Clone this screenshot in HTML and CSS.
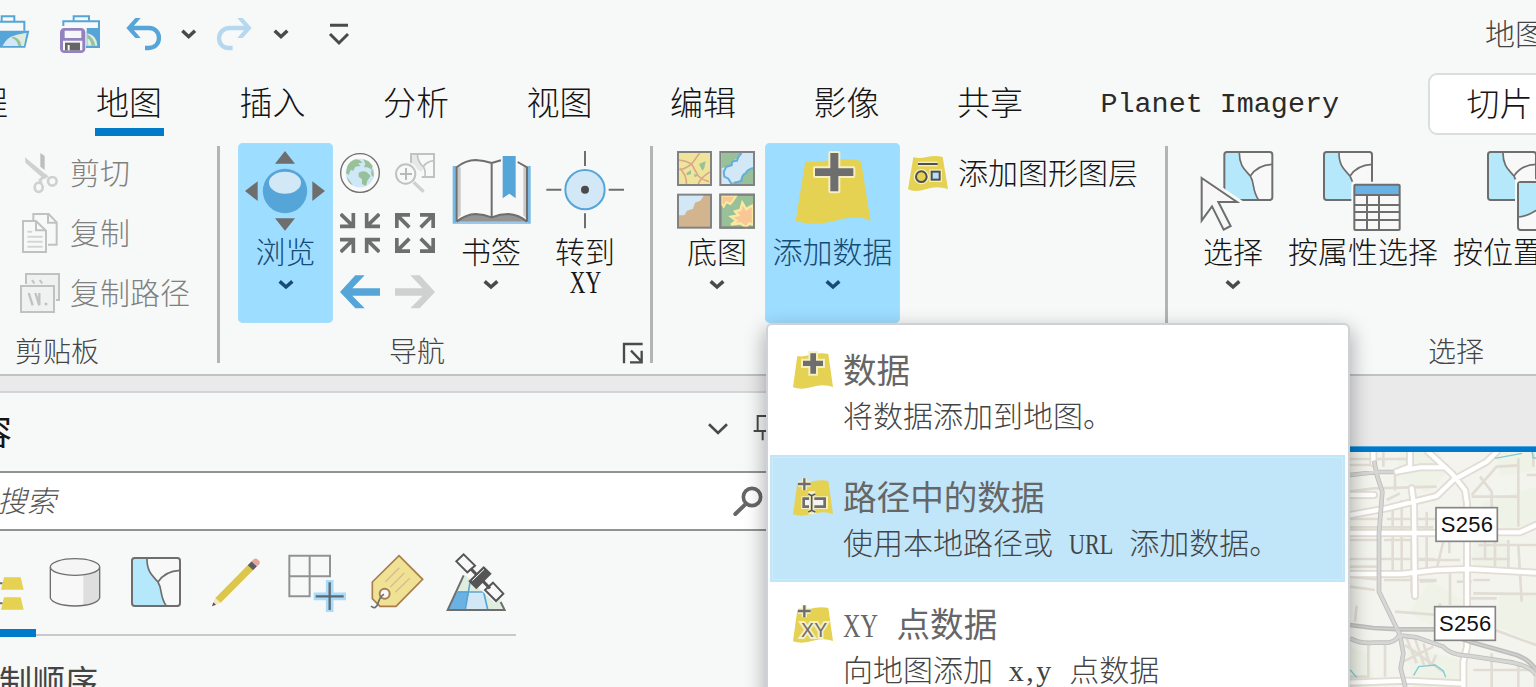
FILE: index.html
```html
<!DOCTYPE html>
<html lang="zh-CN">
<head>
<meta charset="utf-8">
<title>地图</title>
<link rel="stylesheet" href="styles.css">
</head>
<body>
<div class="app">
  <svg class="defs" width="0" height="0">
    <symbol id="chev" viewBox="0 0 48 36"><path d="M5 7L24 24L43 7" fill="none" stroke="currentColor" stroke-width="10.5"/></symbol>
    <symbol id="map" viewBox="390 531 156 156">
      <rect x="397" y="538" width="142" height="142" rx="8" fill="#f8f8f8"/>
      <path d="M397 537H441C440 580 460 592 474 609C488 632 478 650 499 681H397Z" fill="#b4e8fa"/>
      <path d="M441 537C440 580 460 592 474 609C488 632 478 650 499 681M474 609Q495 576 540 574" fill="none" stroke="#6e6e6e" stroke-width="5"/>
      <rect x="396" y="537" width="144" height="144" rx="8" fill="none" stroke="#6e6e6e" stroke-width="6"/>
    </symbol>
    <symbol id="layer" viewBox="78 90 132 120">
      <path d="M97 108Q112 111 130 106Q165 96 190 102L204 201Q180 191 150 199Q110 212 84 202Z" fill="#e5d152"/>
    </symbol>
  </svg>

  <header class="qat">
    <svg class="i-open" width="30" height="42" viewBox="0 39 90 126"><g fill="none" stroke="#56a5d9" stroke-width="6"><path d="M5 62V49H43V62M0 65H73V92" /></g><path d="M0 92H88L76 143H0Z" fill="#56a5d9"/><path d="M8 138Q22 112 50 104L80 98L72 138Z" fill="#dcecdd"/><path d="M8 138Q20 112 42 107L58 138Z" fill="#d2e8f7"/><path d="M36 110Q62 112 64 138H55Q52 120 36 115Z" fill="#98c19a"/></svg>
    <svg class="i-save" width="40" height="42" viewBox="180 39 120 126"><path d="M190 78V64H297V141H258" fill="none" stroke="#56a5d9" stroke-width="6"/><path d="M221 62V49H267V62" fill="none" stroke="#56a5d9" stroke-width="6"/><path d="M260 84H300V144H260Z" fill="#56a5d9"/><path d="M262 100Q290 105 292 137H262Z" fill="#dcecdd"/><path d="M262 102Q282 115 286 137H275Q273 120 262 114Z" fill="#98c19a"/><rect x="183" y="87" width="70" height="69" rx="10" fill="#9482c0" stroke="#9482c0" stroke-width="6"/><path d="M194 92H244V114H194ZM189 122H247V151H189Z" fill="#f7f7f7"/><path d="M195 128H240V151H195Z" fill="#666"/><path d="M203 135H209V151H203Z" fill="#f7f7f7"/></svg>
    <svg class="i-undo" width="36" height="42" viewBox="378 39 108 126"><path d="M388 84H447C487 84 487 144 446 144H435" fill="none" stroke="#56a5d9" stroke-width="13"/><path d="M379 84L406 54H422L396 84L422 114H406Z" fill="#56a5d9"/></svg>
    <svg class="i-drop" width="18" height="42" viewBox="540 39 54 126"><path d="M547 92L566 110L585 92" fill="none" stroke="#4a4a4a" stroke-width="10.5"/></svg>
    <svg class="i-redo" width="36" height="42" viewBox="648 39 108 126"><path d="M745 84H690C647 84 647 144 686 144H698" fill="none" stroke="#b5d8ef" stroke-width="13"/><path d="M755 84L728 54H712L738 84L712 114H728Z" fill="#b5d8ef"/></svg>
    <svg class="i-drop2" width="18" height="42" viewBox="816 39 54 126"><path d="M824 92L843 110L862 92" fill="none" stroke="#4a4a4a" stroke-width="10.5"/></svg>
    <svg class="i-custom" width="22" height="42" viewBox="984 39 66 126"><path d="M990 76H1044M990 102L1017 129L1044 102" fill="none" stroke="#4a4a4a" stroke-width="9"/></svg>
    <span class="doc-title">地图</span>
  </header>

  <nav class="tabs">
    <span class="tab first">工程</span>
    <span class="tab active">地图</span>
    <span class="tab">插入</span>
    <span class="tab">分析</span>
    <span class="tab">视图</span>
    <span class="tab">编辑</span>
    <span class="tab">影像</span>
    <span class="tab">共享</span>
    <span class="tab latin">Planet Imagery</span>
    <span class="context-tab">切片</span>
  </nav>

  <section class="ribbon">
    <div class="group clipboard">
      <div class="rows">
        <div class="small-btn"><svg width="42" height="42" viewBox="57 36 126 126"><path d="M121 39L134 48V90L121 80Z" fill="#bdbfbe"/><path d="M75 52L146 110L132 118L76 68Z" fill="#cfd1d0"/><g fill="none" stroke="#cfd1d0" stroke-width="8"><circle cx="157" cy="124" r="13"/><ellipse cx="116" cy="142" rx="12" ry="14"/><path d="M124 129L120 120L140 104"/></g></svg><span>剪切</span></div>
        <div class="small-btn"><svg width="42" height="42" viewBox="57 216 126 126"><path d="M100 240V222H146L170 247V314H144M144 224V248H169" fill="none" stroke="#c0c2c1" stroke-width="6"/><path d="M69 243H108L138 272V336H69Z" fill="#f7f9f8" stroke="#c0c2c1" stroke-width="6"/><path d="M108 246V271H138" fill="none" stroke="#c0c2c1" stroke-width="6"/><path d="M82 275H97M82 290H128M82 305H128M82 320H128" stroke="#d4d6d5" stroke-width="6"/></svg><span>复制</span></div>
        <div class="small-btn"><svg width="42" height="42" viewBox="57 396 126 126"><path d="M78 432V402H177V480H168" fill="#f0f0f0" stroke="#c0c2c1" stroke-width="6"/><path d="M96 420L103 430M119 420L127 430" stroke="#c0c2c1" stroke-width="6"/><rect x="63" y="438" width="99" height="78" fill="#f0f1f1" stroke="#c0c2c1" stroke-width="6"/><path d="M86 459L98 496M106 459L118 496M118 459V496M134 492H142" stroke="#c0c2c1" stroke-width="7" fill="none"/></svg><span>复制路径</span></div>
      </div>
      <div class="group-label">剪贴板</div>
    </div>

    <div class="group navigate">
      <div class="btn-row">
        <div class="big-btn browse selected">
          <svg width="80" height="80" viewBox="45 33 240 240"><path d="M165 33L195 71H135ZM165 272L195 235H135ZM45 153L83 124V183ZM285 153L247 124V183Z" fill="#6e6e6e"/><circle cx="165" cy="153" r="66.500" fill="#56a5d9"/><ellipse cx="165" cy="128" rx="48" ry="33" fill="#d2e8f7"/></svg>
          <span>浏览</span><svg class="chev" width="16" height="12"><use href="#chev"/></svg>
        </div>
        <div class="nav-grid">
          <svg width="40" height="40" viewBox="330 39 120 120"><circle cx="390" cy="99" r="58" fill="#fbf9fa" stroke="#6e6e6e" stroke-width="4"/><circle cx="390" cy="99" r="43" fill="#cfe8f8"/><path d="M352 78Q362 62 376 58L388 60L398 68L384 70L392 78L376 80L370 92L362 90L356 105L348 100ZM400 58L416 64L428 78L424 88L412 82L402 82L406 72ZM386 98Q398 90 410 96L422 108L412 122L408 138L396 132L396 118L386 110ZM350 110L362 126L368 136Q354 128 350 110Z" fill="#98c19a"/><path d="M424 84Q434 96 430 112L424 104Z" fill="#98c19a"/></svg>
          <svg width="40" height="40" viewBox="495 39 120 120"><path d="M543 78V42H612V111H575" fill="none" stroke="#c0c2c1" stroke-width="6"/><path d="M546 46H562Q566 70 580 84L575 96L546 78Z" fill="#e6e8e7"/><path d="M562 42Q563 66 580 80Q587 90 585 109M580 80Q590 64 612 62" fill="none" stroke="#c0c2c1" stroke-width="5"/><circle cx="527" cy="102" r="37" fill="#f7f9f8"/><circle cx="527" cy="102" r="29" fill="#f7f9f8" stroke="#c0c2c1" stroke-width="6"/><path d="M510 102H546M528 84V120" stroke="#b8bab9" stroke-width="6"/><path d="M551 127L581 155" stroke="#cfd1d0" stroke-width="10"/></svg>
          <svg width="40" height="40" viewBox="330 219 120 120"><path d="M332 222L370 259M370 219V259H330M448 222L410 259M410 219V259H450M332 336L370 299M370 339V299H330M448 336L410 299M410 339V299H450" fill="none" stroke="#6e6e6e" stroke-width="11"/></svg>
          <svg width="40" height="40" viewBox="495 219 120 120"><path d="M538 262L502 226M500.500 264V224.500H540M572 262L608 226M609.500 264V224.500H570M538 296L502 332M500.500 294V333.500H540M572 296L608 332M609.500 294V333.500H570" fill="none" stroke="#6e6e6e" stroke-width="11"/></svg>
          <svg width="40" height="40" viewBox="330 395 120 120"><path d="M330 455L376 405H404L367 444H450V466H367L404 504H376Z" fill="#56a5d9"/></svg>
          <svg width="40" height="40" viewBox="495 395 120 120"><path d="M615 455L569 405H541L578 444H495V466H578L541 504H569Z" fill="#cfd1d0"/></svg>
        </div>
        <div class="big-btn bookmark">
          <svg width="80" height="80" viewBox="34 33 240 240"><path d="M36 78H270V251H36Z" fill="#78b9e6"/><path d="M34 78L50 76Q75 55 105 54Q130 55 153 63Q180 52 210 52L256 76H274V33H34Z" fill="#f7f9f8"/><path d="M46 80Q75 60 105 60Q130 61 153 69Q180 58 210 58L262 80V247H46Z" fill="#f8f8f8"/><path d="M51 82H60V226L51 236ZM248 82H257V236L248 226Z" fill="#c8c8c8"/><path d="M46 245Q75 221 105 221Q130 222 153 232Q178 221 203 221Q235 223 260 245Z" fill="#949494"/><path d="M48 245V82Q75 60 105 60Q130 61 153 69V232M153 69L181 61M231 66L259 82V245M48 245Q75 223 105 222Q130 223 153 232Q178 222 203 222Q235 224 259 245" fill="none" stroke="#6e6e6e" stroke-width="6"/><path d="M182 44H229V72H182Z" fill="#f7f9f8"/><path d="M186 48H225V175L206 161L186 175Z" fill="#56a5d9"/></svg>
          <span>书签</span><svg class="chev" width="16" height="12"><use href="#chev"/></svg>
        </div>
        <div class="big-btn goto">
          <svg width="80" height="80" viewBox="311 33 240 240"><path d="M431 33V78M431 220V265M315 149H360M502 149H548" stroke="#6e6e6e" stroke-width="6"/><circle cx="431" cy="149" r="59" fill="#d2e8f7" stroke="#56a5d9" stroke-width="6"/><circle cx="431" cy="149" r="12" fill="#4a4a4a"/></svg>
          <span>转到</span><span class="xy">XY</span>
        </div>
      </div>
      <div class="group-label">导航</div>
      <svg class="launcher" width="22" height="22" viewBox="546 606 66 66"><path d="M552 670V612H608M573 632L602 662M605 632V667H570" fill="none" stroke="#4a4a4a" stroke-width="7"/></svg>
    </div>

    <div class="group layers">
      <div class="btn-row">
        <div class="big-btn basemap">
          <svg width="80" height="80" viewBox="51 33 240 240"><g stroke="#828282" stroke-width="6"><rect x="57" y="36" width="99" height="99" fill="#f0e49b"/><rect x="184" y="36" width="101" height="99" fill="#d2e8f7"/><rect x="57" y="164" width="99" height="99" fill="#d2b48f"/><rect x="184" y="164" width="101" height="99" fill="#98c19a"/></g><path d="M60 60Q80 62 98 72L122 39M98 72Q70 92 61 88M98 72Q110 95 118 108Q130 120 150 125M62 85Q84 105 82 132M118 132Q124 114 152 96" fill="none" stroke="#d9a98c" stroke-width="5"/><path d="M120 72L140 64L136 84L130 92ZM82 100L96 90V102L84 106ZM104 102L118 106L108 112Z" fill="#98c19a"/><path d="M187 39H246L238 54L222 62L220 74L205 82L187 84Z" fill="#98c19a"/><path d="M282 86V132H212L228 124L242 122L250 106L262 94Z" fill="#98c19a"/><path d="M248 39Q236 50 234 62Q216 62 218 76L202 80L194 96L196 110L208 116L218 132M282 84Q266 88 260 100Q248 104 248 122L226 130" fill="none" stroke="#63ade0" stroke-width="6"/><path d="M60 167H134L124 182L108 188L102 206L84 212L76 226H60Z" fill="#d2e8f7"/><path d="M188 167H232L222 182L214 192L202 186L194 200L187 190Z" fill="#f8c795" stroke="#faeaa0" stroke-width="6"/><path d="M282 196L270 202L262 208L250 188L244 210L228 214L238 226L216 230L232 242L216 254L244 250L262 262L270 250L282 254Z" fill="#f8c795" stroke="#faeaa0" stroke-width="7"/><rect x="184" y="164" width="101" height="99" fill="none" stroke="#828282" stroke-width="6"/></svg>
          <span>底图</span><svg class="chev" width="16" height="12"><use href="#chev"/></svg>
        </div>
        <div class="big-btn add-data selected">
          <svg width="80" height="80" viewBox="399 33 240 240"><path d="M436 64Q455 68 485 64Q560 50 603 64L632 243Q600 225 540 238Q470 262 407 243Z" fill="#e5d152"/><path d="M511 39H535V85H580V108H535V154H511V108H465V85H511Z" fill="#6e6e6e" stroke="#f5efc4" stroke-width="12" stroke-linejoin="round" paint-order="stroke"/></svg>
          <span>添加数据</span><svg class="chev" width="16" height="12"><use href="#chev"/></svg>
        </div>
        <div class="graphics-btn"><svg width="40" height="40" viewBox="744 39 120 120"><path d="M760 52Q780 57 800 51Q825 45 848 51L864 147Q830 137 800 147Q765 158 744 148Z" fill="#e5d152"/><g stroke="#f5efc4" stroke-width="14" fill="none"><path d="M774 72H833"/><circle cx="784" cy="110" r="16"/><rect x="815" y="95" width="24" height="24"/></g><g stroke="#4f4f4f" stroke-width="6" fill="#e5d152"><path d="M774 72H833"/><circle cx="784" cy="110" r="16"/><rect x="815" y="95" width="24" height="24" fill="#b4e0fa"/></g></svg><span>添加图形图层</span></div>
      </div>
    </div>

    <div class="group selection">
      <div class="btn-row">
        <div class="big-btn select">
          <svg width="80" height="80" viewBox="110 33 240 240"><svg x="186" y="30" width="156" height="156"><use href="#map"/></svg><path d="M124 112L234 186L174 187L211 258L190 269L155 199L124 242Z" fill="#f7f7f7" stroke="#f7f9f8" stroke-width="20"/><path d="M124 114L230 186H174L211 258L190 269L155 199L124 242Z" fill="#f7f7f7" stroke="#6e6e6e" stroke-width="6"/></svg>
          <span>选择</span><svg class="chev" width="16" height="12"><use href="#chev"/></svg>
        </div>
        <div class="big-btn by-attr">
          <svg width="80" height="80" viewBox="486 33 240 240"><svg x="486" y="30" width="156" height="156"><use href="#map"/></svg><path d="M574 125H724V276H574Z" fill="#f7f9f8"/><rect x="583" y="134" width="136" height="136" rx="3" fill="#f8f8f8"/><path d="M583 134H719V164H583Z" fill="#6ab2e3"/><g fill="none" stroke="#6e6e6e" stroke-width="6"><rect x="583" y="134" width="136" height="136" rx="3"/><path d="M583 165H719M583 195H719M583 216H719M583 240H719M621 165V270M657 165V270"/></g></svg>
          <span>按属性选择</span>
        </div>
        <div class="big-btn by-loc">
          <svg width="80" height="80" viewBox="981 33 240 240"><svg x="981" y="30" width="156" height="156"><use href="#map"/></svg><path d="M1068 118H1230V276H1068Z" fill="#f7f9f8"/><rect x="1077" y="126" width="144" height="144" rx="8" fill="#f8f8f8" stroke="#6e6e6e" stroke-width="6"/><path d="M1080 129H1200Q1150 222 1080 231Z" fill="#b4e8fa"/><path d="M1080 231Q1150 222 1200 129" fill="none" stroke="#6e6e6e" stroke-width="5"/></svg>
          <span>按位置选择</span>
        </div>
      </div>
      <div class="group-label">选择</div>
    </div>
  </section>

  <main class="work">
    <aside class="pane">
      <div class="pane-head">
        <span class="pane-title">内容</span>
        <svg class="pane-chev" width="22" height="16" viewBox="980 122 66 48"><path d="M986 132L1013 158L1040 132" fill="none" stroke="#4a4a4a" stroke-width="8"/></svg>
        <svg class="pin" width="26" height="28" viewBox="1120 102 78 84"><path d="M1134 153V108H1178V153M1122 153H1190M1149 153V181M1166 108V153" fill="none" stroke="#4a4a4a" stroke-width="6"/></svg>
      </div>
      <div class="search"><span>搜索</span>
        <svg width="30" height="32" viewBox="1060 316 90 96"><circle cx="1117" cy="352" r="26" fill="none" stroke="#666" stroke-width="11"/><path d="M1097 374L1067 403" stroke="#666" stroke-width="12" stroke-linecap="round"/></svg>
      </div>
      <div class="tools">
        <svg class="t1" width="24" height="60" viewBox="0 521 72 180"><path d="M0 612H8M0 672H8" stroke="#6e6e6e" stroke-width="6"/><path d="M12 594H62L71 631H3ZM12 654H62L71 691H3Z" fill="#e5d152"/></svg>
        <svg class="t2" width="52" height="60" viewBox="147 521 156 180"><path d="M151 564V656Q160 678 225 680Q290 678 299 656V564Z" fill="#f8f8f8"/><path d="M250 587Q285 582 299 570V656Q290 674 250 678Z" fill="#dedede"/><g stroke="#6e6e6e" stroke-width="4"><path d="M151 564V656Q160 678 225 680Q290 678 299 656V564" fill="none"/><ellipse cx="225" cy="563" rx="74" ry="25" fill="#f5f5f5"/></g></svg>
        <svg class="t3" width="52" height="52"><use href="#map"/></svg>
        <svg class="t4" width="52" height="60" viewBox="630 521 156 180"><path d="M636 681L646 656L662 670Z" fill="#fae2c6"/><path d="M636 681L640 669L648 676Z" fill="#555"/><path d="M646 656L743 558L759 573L662 670Z" fill="#dcc64b"/><path d="M743 558L755 546L771 561L759 573Z" fill="#5e5e5e"/><path d="M755 546L762 539Q768 535 774 541L778 545Q782 551 776 557L771 561Z" fill="#e6a59b"/></svg>
        <svg class="t5" width="60" height="60" viewBox="861 521 180 180"><path d="M868 529H990V591H868ZM929 529V591M868 591V651H929V591" fill="none" stroke="#929292" stroke-width="6"/><path d="M941 651H1038M989 602V698" stroke="#a9dbfa" stroke-width="23"/><path d="M947 651H1031M989 609V692" stroke="#5e6a72" stroke-width="7"/></svg>
        <svg class="t6" width="56" height="60" viewBox="-30 521 168 180"><path d="M57 529L128 600L48 681H0L-23 658V608Z" fill="#f0e294" stroke="#a97d4d" stroke-width="5"/><path d="M16 607L58 565M31 623L73 581M46 639L89 597" stroke="#dcb98d" stroke-width="4"/><circle cx="14" cy="643" r="15" fill="#fafafa" stroke="#a97d4d" stroke-width="6"/><path d="M12 645Q2 650 -4 666Q-12 695 -27 680" fill="none" stroke="#6e6e6e" stroke-width="5"/></svg>
        <svg class="t7" width="60" height="60" viewBox="198 521 180 180"><path d="M250 588L203 692H374L340 610Z" fill="#deeddd"/><path d="M232 636H268L254 690H206Z" fill="#6ab2e3"/><path d="M268 644H312L322 690H258Z" fill="#d2e8f7"/><path d="M234 638H315M256 690L270 610M311 638L323 690" stroke="#56a5d9" stroke-width="5" fill="none"/><path d="M251 588L203 692H374L362 668" fill="none" stroke="#6e6e6e" stroke-width="6"/><path d="M262 560L362 655" stroke="#f7f9f8" stroke-width="48"/><path d="M251 525L285 559L262 579L229 546ZM339 610L370 643L348 665L315 632Z" fill="#f8f8f8" stroke="#555" stroke-width="6"/><path d="M272 568L330 627" stroke="#555" stroke-width="9"/><path d="M311 560L335 583L289 630L265 606Z" fill="#555"/><path d="M277 604L312 570" stroke="#fff" stroke-width="3"/></svg>
      </div>
      <div class="tools-line"><i></i></div>
      <div class="order">绘制顺序</div>
    </aside>
    <section class="view">
      <div class="view-tabs"></div>
      <svg class="basemap-view" width="186" height="235" viewBox="150 276 558 705">
        <path d="M150 276H708V981H150Z" fill="#f4f4ee"/>
        <path d="M300 276H420L440 340L380 400L290 350ZM540 430L708 380V500L620 520ZM390 660L520 740L400 800L330 760ZM600 700H708V850L590 800ZM320 860L480 900L470 981H340ZM150 860L200 880L230 981H150ZM520 540H620V620H520ZM590 276H700L708 330L600 350Z" fill="#eef2e7"/>
        <g fill="none" stroke="#e1ddd4" stroke-width="8">
          <path d="M150 297H320M150 315H210M250 276V320M285 345V392M150 395L220 385L410 380M260 420L300 400M260 477H405M150 477H235M150 502H400M150 540H235V597H150M252 540H335V700M150 597H405M278 435V640M305 420V640M252 660H410M360 665L410 662M380 455V625M150 620H230M150 650L230 658M150 680L225 690M450 640V735M430 545L412 618M448 520V580M355 600H480M515 597H630M535 555H708M585 530V625M625 540V625M555 540V595M655 555L665 725M520 700L708 702M470 665H515M515 410H655V295M540 350L575 395V515M515 405L590 320L655 316M655 405V500M680 345H708M700 276V320M170 737L165 785M285 755L480 770M420 730V770M585 810L708 855M205 855V955M255 855V950M320 835L350 910M345 835L372 915M370 850L390 915M310 905L400 860M315 855L430 935M408 885L395 915M520 930H708M575 880V981M655 915V981M705 940V981M150 950H200M520 660H570M510 715H590"/>
        </g>
        <g fill="none" stroke="#e1ddd4" stroke-width="24" stroke-linejoin="round" stroke-linecap="round">
          <path d="M220 276V310M330 276V320L290 335M385 276L455 340L495 390L501 430V860L490 905V981M150 465L260 445L410 408L460 360L560 305L590 276M290 335L360 322H435M150 519H405M590 517H660L708 495M150 405H222M335 385L342 435L345 708M150 642H305L410 630L510 627L708 638M150 968L320 962L480 970"/>
        </g>
        <g fill="none" stroke="#fff" stroke-width="13" stroke-linejoin="round" stroke-linecap="round">
          <path d="M220 276V310M330 276V320L290 335M385 276L455 340L495 390L501 430V860L490 905V981M150 465L260 445L410 408L460 360L560 305L590 276M290 335L360 322H435M150 519H405M590 517H660L708 495M150 405H222M335 385L342 435L345 708M150 642H305L410 630L510 627L708 638M150 968L320 962L480 970"/>
        </g>
        <g fill="none" stroke="#bdbdbb" stroke-width="14" stroke-linejoin="round"><path d="M150 345L230 336H280M222 302L232 350L247 395L237 520V695L300 825L310 880L302 925L316 981M150 795L220 804L300 808H400L520 848L650 885Q690 900 708 930M150 835Q180 852 220 848H265Q290 842 297 826L350 832L430 860Q450 885 510 888L640 908Q690 918 708 945"/></g>
        <g fill="none" stroke="#d6d6d5" stroke-width="9" stroke-linejoin="round"><path d="M150 345L230 336H280M222 302L232 350L247 395L237 520V695L300 825L310 880L302 925L316 981M150 835Q180 852 220 848H265Q290 842 297 826L350 832L430 860Q450 885 510 888L640 908Q690 918 708 945"/></g>
        <path d="M150 795L220 804L300 808H400L520 848L650 885Q690 900 708 930" fill="none" stroke="#cfcfce" stroke-width="5"/>
        <path d="M585 295L666 280M696 276L700 294H708M341 946L356 920L405 915L430 933L437 952M150 929L170 952" fill="none" stroke="#80cbd5" stroke-width="4"/>
        <g fill="#fff" stroke="#858585" stroke-width="5"><rect x="408" y="443" width="184" height="101"/><rect x="404" y="740" width="182" height="101"/></g>
        <g class="shield"><text x="501" y="516">S256</text><text x="496" y="814">S256</text></g>
      </svg>
    </section>
  </main>

  <div class="menu">
    <div class="item">
      <svg width="44" height="40" viewBox="78 90 132 120"><use href="#layer" x="78" y="90" width="132" height="120"/><path d="M136 100H153V122H174V138H153V161H136V138H114V122H136Z" fill="#6e6e6e" stroke="#f5efc4" stroke-width="12" paint-order="stroke"/></svg>
      <div class="item-text"><b>数据</b><p>将数据添加到地图。</p></div>
    </div>
    <div class="item hot">
      <svg width="44" height="40" viewBox="78 90 132 120"><use href="#layer" x="78" y="90" width="132" height="120"/><path d="M99 111H137M118 94V130" stroke="#f5efc4" stroke-width="16"/><path d="M99 111H137M118 94V130" stroke="#6e6e6e" stroke-width="7"/><path d="M116 155H182V179H116ZM130 140H151M130 195H151M140 140V195" fill="#f4f4f4" stroke="#f5efc4" stroke-width="14"/><path d="M132 155H116V179H132M148 155H179V179H148" fill="#f4f4f4" stroke="#6e6e6e" stroke-width="8"/><path d="M140 145V190M130 141L140 146L151 141M130 195L140 190L151 195" fill="none" stroke="#555" stroke-width="5"/></svg>
      <div class="item-text"><b>路径中的数据</b><p>使用本地路径或 <span class="half url">URL</span> 添加数据。</p></div>
    </div>
    <div class="item">
      <svg width="44" height="40" viewBox="78 90 132 120"><use href="#layer" x="78" y="90" width="132" height="120"/><path d="M99 111H137M118 94V130" stroke="#f5efc4" stroke-width="16"/><path d="M99 111H137M118 94V130" stroke="#6e6e6e" stroke-width="7"/><text class="xy-icon" x="148" y="188">XY</text></svg>
      <div class="item-text"><b><span class="half pt">XY</span> 点数据</b><p>向地图添加 <span class="half low">x,y</span> 点数据</p></div>
    </div>
  </div>
</div>
</body>
</html>
```

FILE: styles.css
```css
* { box-sizing: border-box; }
body { margin: 0; overflow: hidden; }
.app {
  position: relative;
  display: flex;
  flex-direction: column;
  width: 1536px;
  height: 687px;
  overflow: hidden;
  background: #f7f9f8;
  color: #151515;
  font-family: "Noto Sans CJK SC", sans-serif;
  font-weight: 300;
  white-space: nowrap;
}
.defs { position: absolute; }
svg { display: block; flex: none; }

.qat { display: flex; height: 70px; padding-top: 13px; flex: none; }
.i-save { margin-left: 30px; }
.i-undo { margin-left: 26px; }
.i-drop, .i-redo { margin-left: 18px; }
.i-drop2 { margin-left: 20px; }
.i-custom { margin-left: 38px; }
.doc-title { margin-left: auto; width: 51px; font-size: 30px; line-height: 38px; color: #444; }

.tabs { display: flex; height: 70px; flex: none; font-size: 33px; line-height: 63px; }
.tab { position: relative; flex: none; width: 66px; margin-right: 77.5px; }
.tab.first { margin-left: -58px; margin-right: 88px; }
.tab.active::after {
  content: "";
  position: absolute;
  left: -1px;
  top: 58px;
  width: 69px;
  height: 8px;
  background: #007ac9;
}
.tab.latin { width: 238px; margin-right: 0; font-family: "Liberation Mono", monospace; font-size: 28.4px; line-height: 70px; color: #2a2a2a; }
.context-tab {
  flex: none;
  margin: 3px 0 0 89px;
  width: 190px;
  height: 62px;
  padding-left: 37px;
  border: 2px solid #dcdddd;
  border-radius: 9px;
  background: #fff;
  line-height: 54px;
}

.ribbon { display: flex; height: 236px; flex: none; border-bottom: 2px solid #bfc1c4; font-size: 30px; }
.group { position: relative; flex: none; height: 234px; padding-top: 3px; }
.group:not(:last-child)::after {
  content: "";
  position: absolute;
  right: 0;
  top: 6px;
  width: 3px;
  height: 217px;
  background: #b3b4b4;
}
.clipboard { width: 220px; padding-left: 19px; }
.clipboard::after { width: 2px; }
.navigate { width: 433px; padding-left: 18px; }
.layers { width: 515px; padding-left: 16px; }
.selection { width: 368px; padding-left: 25px; }
.rows { height: 189px; padding-top: 9px; }
.small-btn { display: flex; height: 60px; gap: 9px; color: #808080; line-height: 39px; }
.group-label { font-size: 28px; line-height: 36px; color: #444; }
.clipboard .group-label { margin-left: -4px; }
.navigate .group-label { padding-left: 151px; }
.selection .group-label { padding-left: 235px; }
.launcher { position: absolute; left: 402px; top: 202px; }
.btn-row { display: flex; height: 189px; }
.big-btn { display: flex; flex-direction: column; align-items: center; height: 180px; padding-top: 8px; line-height: 31px; border-radius: 5px; }
.big-btn > svg:first-child { margin-bottom: 4px; }
.chev { margin-top: 13px; color: #4a4a4a; }
.selected { background: #9dddff; color: #174a75; box-shadow: inset 0 0 0 1px #a5dffd; }
.selected .chev { color: #174a75; }
.browse { width: 95px; }
.browse > svg:first-child { margin-left: -1px; }
.nav-grid { display: grid; grid-template-columns: 40px 40px; grid-auto-rows: 40px; gap: 19.500px 15px; padding: 10px 0 0 7px; }
.bookmark { width: 80px; margin-left: 16px; }
.bookmark > svg:first-child { margin-left: 1px; }
.goto { width: 80px; margin-left: 14px; }
.xy { margin-top: 1px; font-family: "Liberation Serif", serif; font-size: 31px; transform: scaleX(.7); }
.basemap { width: 92px; margin-left: 2px; }
.basemap > svg:first-child { margin-left: -2px; }
.add-data { width: 135px; margin-left: 2px; margin-right: -1px; }
.graphics-btn { display: flex; gap: 10px; padding: 10px 0 0 9px; line-height: 37px; }
.select { width: 80px; }
.select > svg:first-child { margin-left: 8px; }
.by-attr { width: 156px; margin-left: 15px; }
.by-attr > svg:first-child { margin-left: -2px; }
.by-loc { width: 156px; margin-left: 15px; }
.by-loc > svg:first-child { margin-left: -4px; }

.work { display: flex; flex: 1; background: #eaeaea; min-height: 0; }
.pane { width: 1000px; flex: none; margin-top: 15px; border-top: 2px solid #d1d4d8; background: #f7f9f8; }
.pane-head { display: flex; height: 78px; align-items: flex-start; }
.pane-title { width: 70px; margin-left: -58px; font-size: 35px; font-weight: 400; line-height: 74px; }
.pane-chev { margin: 28px 0 0 695px; }
.pin { margin: 21px 0 0 24px; }
.search { display: flex; height: 60px; border: solid #929292; border-width: 2px 0; background: #fff; color: #555; font-size: 29.500px; font-style: italic; line-height: 53px; }
.search span { width: 61px; margin-left: -3px; }
.search svg { margin: 12px 0 0 675px; }
.tools { display: flex; height: 98px; padding-top: 22px; }
.t2 { margin-left: 25px; }
.t3 { margin: 3px 0 0 29px; }
.t4 { margin-left: 28px; }
.t5 { margin-left: 25px; }
.t6 { margin-left: 23px; }
.t7 { margin-left: 20px; }
.tools-line { height: 8px; width: 516px; background: linear-gradient(#c8cac9, #c8cac9) 0 5px / 516px 2px no-repeat; }
.tools-line i { display: block; width: 36px; height: 8px; background: #007ac9; }
.order { margin: 18px 0 0 -34px; color: #444; font-size: 33px; font-weight: 400; line-height: 50px; }
.view { width: 186px; margin-left: 350px; flex: none; }
.view-tabs { height: 76px; border-bottom: 5px solid #0079cc; box-shadow: inset 0 -1px #4da6dc; }
.shield { font: 66px "Liberation Sans", sans-serif; text-anchor: middle; fill: #111; letter-spacing: 1px; }

.menu {
  position: absolute;
  left: 766px;
  top: 323px;
  width: 584px;
  height: 400px;
  padding: 3px 3px 0 2px;
  border: 2px solid #d0d1d7;
  border-radius: 6px;
  background: #fff;
  box-shadow: 0 8px 20px 2px rgba(0, 0, 0, .3);
}
.item { display: flex; height: 127px; padding: 20px 0 0 21px; }
.item > svg { margin-top: 2px; }
.item.hot { background: #c1e6fa; box-shadow: inset 0 0 0 2px #c1e6fa, inset 0 0 0 3px #cdebfb; }
.item-text { margin-left: 8px; }
.item b { display: block; color: #666; font-size: 33.600px; font-weight: 400; line-height: 42px; }
.item p { margin: 0; color: #444; font-size: 30px; line-height: 48px; }
.half { display: inline-block; font-family: "Liberation Serif", serif; line-height: 1; transform-origin: left; }
.url { width: 45px; margin: 0 9px; transform: scaleX(.74); }
.pt { width: 34px; margin-right: 12px; transform: scaleX(.72); }
.low { width: 45px; margin: 0 9px; letter-spacing: 2.500px; }
.xy-icon { font: 58px "Liberation Sans", sans-serif; text-anchor: middle; fill: #6e6e6e; stroke: #f5efc4; stroke-width: 12px; paint-order: stroke; letter-spacing: 1px; }
```
